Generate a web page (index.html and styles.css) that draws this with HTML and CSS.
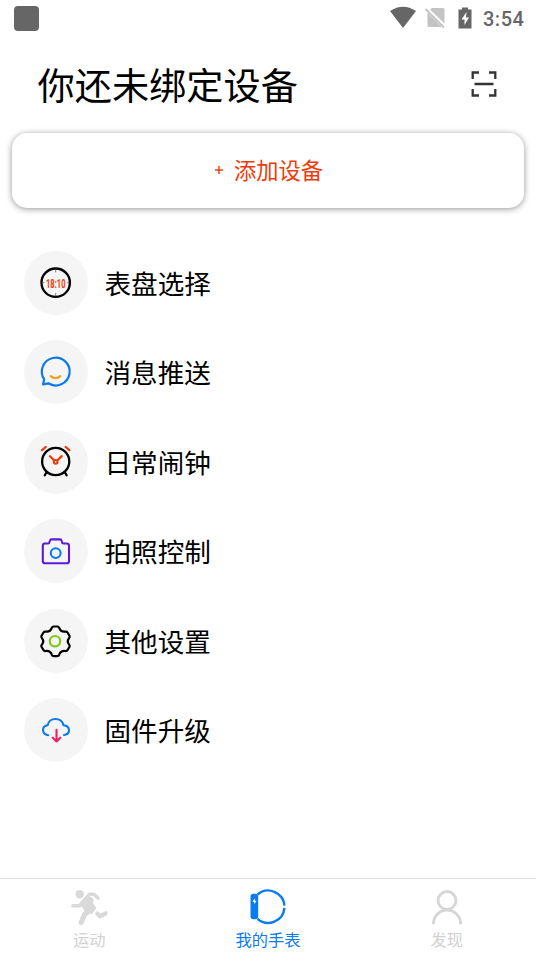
FILE: index.html
```html
<!DOCTYPE html>
<html lang="zh-CN">
<head>
<meta charset="utf-8">
<title>我的手表</title>
<link rel="stylesheet" href="styles.css">
</head>
<body>
<div class="screen">
  <div class="status">
    <span class="status-app"></span>
    <svg class="status-icons" width="86" height="36" viewBox="0 0 86 36">
      <path fill="#666" d="M0 11Q13 2.500 26 11L13 28Z"/>
      <path fill="#c4c4c4" d="M42 8H53Q54.500 8 54.500 9.500V23.500L40 9.500ZM37.500 12.500L52 27H39Q37.500 27 37.500 25.500Z"/>
      <path fill="none" stroke="#c4c4c4" stroke-width="1.800" d="M35.500 9L54 27.500"/>
      <path fill="#666" d="M68.500 9.500H72V7.500H78V9.500H81.500V28.500H68.500Z"/>
      <path fill="#fff" d="M76.500 12L71.500 19.500H74.500V25L79 17.500H76Z"/>
    </svg>
    <span class="time">3:54</span>
  </div>

  <header class="header">
    <h1 class="title">你还未绑定设备</h1>
    <svg class="scan" width="26" height="26" viewBox="0 0 26 26" fill="none" stroke="#333" stroke-width="2.300">
      <path d="M1.700 8V1.500H8M18 1.500H24.300V8M24.300 18V24.500H18M8 24.500H1.700V18M3.500 13H22.500"/>
    </svg>
  </header>

  <button class="add"><svg width="8" height="8" viewBox="0 0 8 8" stroke="#f03c0c" stroke-width="1.400"><path d="M0 4H8M4 0V8"/></svg><span>添加设备</span></button>

  <ul class="menu">
    <li class="row">
      <svg class="icon" viewBox="0 0 64 64">
        <circle cx="31.700" cy="31.700" r="14.200" stroke="#000" stroke-width="2.300"/>
        <path stroke="#555" stroke-width=".8" d="M31.700 18.500V21M31.700 42.500V45M18.500 31.700H20M43.500 31.700H45"/>
        <text class="digits" x="22" y="36.600" textLength="19.500" lengthAdjust="spacingAndGlyphs">18:10</text>
      </svg>
      <span>表盘选择</span>
    </li>
    <li class="row">
      <svg class="icon" viewBox="0 0 64 64" stroke-width="2.200">
        <path stroke="#0b7bea" d="M20.200 39.300A13.900 13.900 0 1 1 24.300 43.300L19.100 44.300Z"/>
        <path stroke="#f0a11b" d="M26.700 36.200Q31.500 40 36.300 36.200"/>
      </svg>
      <span>消息推送</span>
    </li>
    <li class="row">
      <svg class="icon" viewBox="0 0 64 64" stroke-width="2.300">
        <circle cx="31.700" cy="31.500" r="13.600" stroke="#000"/>
        <path stroke="#000" d="M22.700 42L20.800 45.300M40.700 42L42.600 45.300"/>
        <path stroke="#f03c0c" d="M18 20.200L21.700 17M41.700 17L45.400 20.200M26 26.300L30.200 30.500M33.200 30.500L37.700 26.200"/>
        <circle cx="31.700" cy="31.800" r="1.900" stroke="#f03c0c" stroke-width="2"/>
      </svg>
      <span>日常闹钟</span>
    </li>
    <li class="row">
      <svg class="icon" viewBox="0 0 64 64" stroke-width="2.100">
        <path stroke="#5a1bd6" d="M21 24.500H24.200Q25.200 24.500 25.500 23L26 21.500Q26.300 20.400 27.500 20.400H36Q37.200 20.400 37.500 21.500L38 23Q38.300 24.500 39.300 24.500H42.700Q45 24.500 45 26.800V42Q45 44.300 42.700 44.300H21Q18.800 44.300 18.800 42V26.800Q18.800 24.500 21 24.500Z"/>
        <circle cx="31.700" cy="34.100" r="4.900" stroke="#0b7bea"/>
      </svg>
      <span>拍照控制</span>
    </li>
    <li class="row">
      <svg class="icon" viewBox="0 0 64 64" stroke-width="2.200">
        <path stroke="#000" d="M29.500 17.500H33.500Q34.600 17.500 35.200 18.900C36.300 22 38 23 41.200 22.600Q42.800 22.400 43.500 23.500L45.500 26.800Q46.100 28 45 29.200C43.200 31.400 43.200 33.200 45 35.400Q46.100 36.600 45.500 37.800L43.500 41.100Q42.800 42.200 41.200 42C38 41.600 36.300 42.600 35.200 45.700Q34.600 47.100 33.500 47.100H29.500Q28.400 47.100 27.800 45.700C26.700 42.600 25 41.600 21.800 42Q20.200 42.200 19.500 41.100L17.500 37.800Q16.900 36.600 18 35.400C19.800 33.200 19.800 31.400 18 29.200Q16.900 28 17.500 26.800L19.500 23.500Q20.200 22.400 21.800 22.600C25 23 26.700 22 27.800 18.900Q28.400 17.500 29.500 17.500Z"/>
        <circle cx="31" cy="32.200" r="5.200" stroke="#7fc91f"/>
      </svg>
      <span>其他设置</span>
    </li>
    <li class="row">
      <svg class="icon" viewBox="0 0 64 64" stroke-width="2.100">
        <path stroke="#0b7bea" d="M24.200 37.200Q19 36.500 19 31.800Q19.200 27.700 23.700 27.200C25 19 37.500 19 39.500 27.300Q45 27.800 45 32.400Q44.700 36.700 40 37"/>
        <path stroke="#ef1f67" d="M32.500 31.700V43.500M28.700 39.700L32.500 43.500L36.300 39.700"/>
      </svg>
      <span>固件升级</span>
    </li>
  </ul>

  <nav class="tabs">
    <a class="tab">
      <svg width="40" height="40" viewBox="0 0 40 40" fill="none" stroke="#d9d9d9" stroke-linecap="round" stroke-linejoin="round">
        <circle cx="10.700" cy="7.200" r="4.200" fill="#d9d9d9" stroke="none"/>
        <path stroke-width="3.600" d="M4 18.700H10.500L20.500 7.300H25L29 11"/>
        <path fill="#d9d9d9" stroke-width="2" d="M19 9.500L23.500 12L23 17L26.300 21L22.500 26L17 24.500L13 18Z"/>
        <path stroke-width="5" d="M23.300 21.500L15.500 27.500L12.200 35.500"/>
        <path stroke-width="4.200" d="M28.300 26.500L31 29.300L36.700 26.300"/>
      </svg>
      <span>运动</span>
    </a>
    <a class="tab active">
      <svg width="40" height="40" viewBox="0 0 40 40">
        <path fill="none" stroke="#0b7bf0" stroke-width="2.400" d="M9.500 7.500A16.300 16.300 0 0 1 36.400 18.600M36.400 20.800A16.300 16.300 0 0 1 9.500 31.900"/>
        <rect x="2.500" y="6.800" width="7.700" height="25.500" rx="2.800" fill="#0b7bf0"/>
        <path fill="#fff" d="M6.500 11.500L4.500 14.800H6L6.500 17L8.500 13.700H7Z"/>
      </svg>
      <span>我的手表</span>
    </a>
    <a class="tab">
      <svg width="40" height="40" viewBox="0 0 40 40" fill="none" stroke="#d5d5d5" stroke-width="2.800">
        <circle cx="20" cy="13.500" r="9"/><path d="M6.300 37.300C6.800 18.500 33.200 18.500 33.700 37.300"/>
      </svg>
      <span>发现</span>
    </a>
  </nav>
</div>
</body>
</html>
```

FILE: styles.css
```css
* { box-sizing: border-box; }

body {
  margin: 0;
  background: #fff;
  color: #000;
  font-family: "Noto Sans CJK SC", sans-serif;
}

.screen {
  display: flex;
  flex-direction: column;
  width: 536px;
  height: 954px;
  overflow: hidden;
}

.status {
  display: flex;
  align-items: center;
  height: 36px;
  padding: 0 10px 0 14px;
}

.status-app {
  width: 25px;
  height: 25px;
  border-radius: 4px;
  background: #666;
}

.status-icons { margin-left: auto; }

.time {
  width: 43px;
  margin-left: 7px;
  font: 500 20px/36px Roboto, sans-serif;
  letter-spacing: .5px;
  color: #666;
  padding-top: 2px;
}

.header {
  display: flex;
  align-items: center;
  justify-content: space-between;
  height: 97px;
  padding: 0 39px 1px 37.500px;
}

.title {
  margin: 0;
  padding-bottom: 1px;
  font-size: 37.200px;
  line-height: 56px;
  font-weight: 400;
}

.add {
  display: flex;
  align-items: center;
  justify-content: center;
  gap: 11px;
  flex: none;
  height: 75px;
  margin: 0 12px;
  padding: 0 0 2px 2px;
  border: 0;
  border-radius: 15px;
  background: #fff;
  box-shadow: 0 1px 6px rgba(0, 0, 0, .42);
  color: #f03c0c;
  font: 22.300px/32px "Noto Sans CJK SC", sans-serif;
}

.add span { padding-bottom: 2px; }

.menu {
  display: flex;
  flex-direction: column;
  gap: 25.500px;
  margin: 42.900px 0 0;
  padding: 0 24px;
  list-style: none;
}

.row {
  display: flex;
  align-items: center;
  gap: 16.500px;
  height: 64px;
  font-size: 26.600px;
  line-height: 40px;
}

.icon {
  width: 64px;
  height: 64px;
  border-radius: 50%;
  background: #f5f5f5;
  fill: none;
  stroke-linecap: round;
  stroke-linejoin: round;
}

.digits {
  fill: #f03c0c;
  font: 700 13px Roboto, sans-serif;
}

.tabs {
  display: grid;
  grid-template-columns: repeat(3, 1fr);
  height: 76px;
  margin-top: auto;
  border-top: 1px solid #e2e2e2;
  box-shadow: 0 0 2px rgba(0, 0, 0, .08);
}

.tab {
  display: flex;
  flex-direction: column;
  align-items: center;
  padding-top: 8px;
  color: #d2d2d2;
  font-size: 16.300px;
  line-height: 24px;
}

.active { color: #0b7bf0; }
```
